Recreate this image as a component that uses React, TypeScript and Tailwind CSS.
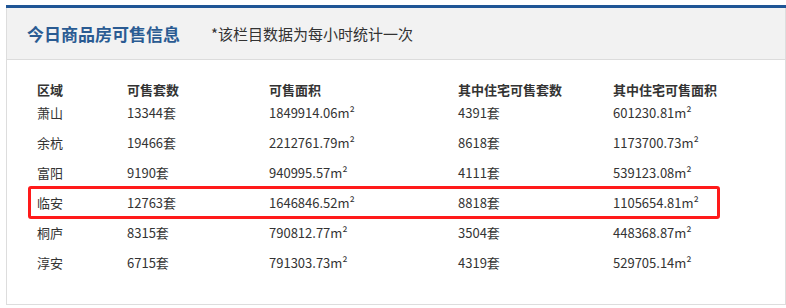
const rows = [
	{ area: "萧山", count: "13344套", size: "1849914.06m²", homes: "4391套", homeSize: "601230.81m²" },
	{ area: "余杭", count: "19466套", size: "2212761.79m²", homes: "8618套", homeSize: "1173700.73m²" },
	{ area: "富阳", count: "9190套", size: "940995.57m²", homes: "4111套", homeSize: "539123.08m²" },
	{ area: "临安", count: "12763套", size: "1646846.52m²", homes: "8818套", homeSize: "1105654.81m²", marked: true },
	{ area: "桐庐", count: "8315套", size: "790812.77m²", homes: "3504套", homeSize: "448368.87m²" },
	{ area: "淳安", count: "6715套", size: "791303.73m²", homes: "4319套", homeSize: "529705.14m²" },
];

const cols = "grid grid-cols-[90px_142px_189px_155px_1fr]";

export default function App() {
	return (
		<div
			className="w-[786px] h-[308px] bg-white pl-[6px] pt-[5px]"
			style={{ fontFamily: '"Noto Sans CJK SC", "Noto Sans", sans-serif' }}
		>
			<div className="w-[780px] h-[300px] flex flex-col border-t-[3px] border-[#1f5595]">
				<div className="h-[52px] flex items-center bg-[#f2f2f2] border-x border-b border-x-[#dddddd] border-b-[#dcdcdc] pl-[20px]">
					<span className="text-[17px] font-bold text-[#2a5b92] leading-none">
						今日商品房可售信息
					</span>
					<span className="ml-[31px] text-[15px] text-[#333333] leading-none">
						*该栏目数据为每小时统计一次
					</span>
				</div>
				<div className="flex-1 bg-white border-x border-b border-[#dddddd] pl-[30px] pt-[20px]">
					<div className={`${cols} h-[18px] items-center text-[13px] font-bold text-[#333333]`}>
						<span>区域</span>
						<span>可售套数</span>
						<span>可售面积</span>
						<span>其中住宅可售套数</span>
						<span>其中住宅可售面积</span>
					</div>
					{rows.map((r) => (
						<div
							key={r.area}
							className={`${cols} relative h-[30px] items-center text-[13px] text-[#333333]`}
						>
							<span>{r.area}</span>
							<span>{r.count}</span>
							<span>{r.size}</span>
							<span>{r.homes}</span>
							<span>{r.homeSize}</span>
							{r.marked && (
								<div className="absolute left-[-9px] top-[-2px] w-[692px] h-[33px] border-[3px] border-[#ff1a1a] rounded-[3px]" />
							)}
						</div>
					))}
				</div>
			</div>
		</div>
	);
}
